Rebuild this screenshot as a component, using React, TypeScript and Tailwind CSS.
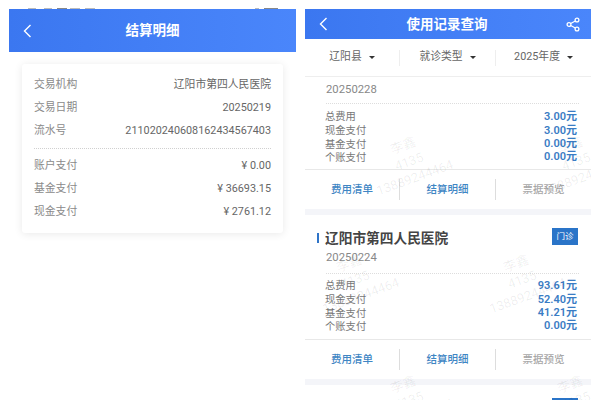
const font = "font-['Roboto','Noto_Sans_CJK_SC',sans-serif]";

function Wm({ className }: { className: string }) {
  return (
    <div className={`pointer-events-none absolute w-[100px] -rotate-[20deg] text-center text-[13px] leading-[17px] text-[#000000]/[0.07] whitespace-nowrap ${className}`}>
      <div>李鑫</div>
      <div>4135</div>
      <div>13889244464</div>
    </div>
  );
}

function Share() {
  return (
    <svg width="14" height="15" viewBox="0 0 14 15" fill="none" stroke="white" strokeWidth="1.3">
      <circle cx="11" cy="3" r="1.9" />
      <circle cx="3" cy="7.5" r="1.9" />
      <circle cx="11" cy="12" r="1.9" />
      <path d="M4.7 6.5 9.3 4M4.7 8.5 9.3 11" />
    </svg>
  );
}

function Back() {
  return (
    <svg width="9" height="14" viewBox="0 0 9 14" fill="none" stroke="white" strokeWidth="1.4">
      <path d="M7.5 1 1.5 7l6 6" />
    </svg>
  );
}

function Row({ l, r }: { l: string; r: string }) {
  return (
    <div className="flex h-[23px] items-center justify-between">
      <span className="text-[#8a8a8a]">{l}</span>
      <span className="text-[#666]">{r}</span>
    </div>
  );
}

function Fee({ l, r, h }: { l: string; r: string; h: string }) {
  return (
    <div className={`flex items-center justify-between ${h}`}>
      <span className="text-[10.3px] text-[#777]">{l}</span>
      <span className="text-[11px] font-semibold text-[#3a7cc4]">{r}</span>
    </div>
  );
}

function Fees({ v }: { v: string[] }) {
  return (
    <div className="pl-[20px] pr-[14px]">
      <Fee l="总费用" r={v[0]} h="h-[14px]" />
      <Fee l="现金支付" r={v[1]} h="h-[14px]" />
      <Fee l="基金支付" r={v[2]} h="h-[13px]" />
      <Fee l="个账支付" r={v[3]} h="h-[13px]" />
    </div>
  );
}

function Actions() {
  return (
    <div className="flex h-[40px] items-center border-t border-[#e8e8e8] text-[10.5px] font-medium">
      <div className="flex h-[21px] w-[95px] items-center justify-center border-r border-[#ddd] text-[#3f86c4]">费用清单</div>
      <div className="flex h-[21px] w-[96px] items-center justify-center border-r border-[#ddd] text-[#3f86c4]">结算明细</div>
      <div className="flex h-[21px] w-[95px] items-center justify-center text-[#a8a8a8]">票据预览</div>
    </div>
  );
}

function Filter({ t, w, border }: { t: string; w: string; border?: boolean }) {
  return (
    <div className={`flex h-[16px] items-center justify-center gap-[7px] ${w} ${border ? "border-r border-[#eee]" : ""}`}>
      <span>{t}</span>
      <span className="h-0 w-0 border-x-[3px] border-t-[3.5px] border-x-transparent border-t-[#333]" />
    </div>
  );
}

function CardHead() {
  return (
    <div className="flex h-[33px] items-start justify-between pl-[12px] pr-[13px] pt-[13px]">
      <div className="flex h-[20px] items-center">
        <span className="h-[10px] w-[2px] bg-[#2f74c8]" />
        <span className="ml-[6px] text-[13.7px] font-semibold text-[#444]">辽阳市第四人民医院</span>
      </div>
      <span className="flex h-[17px] w-[26px] items-center justify-center bg-[#2a74c8] text-[8.5px] text-white">门诊</span>
    </div>
  );
}

export default function App() {
  return (
    <div className={`flex h-[400px] w-[600px] overflow-hidden bg-white ${font}`}>
      <div className="ml-[9px] w-[287px] shrink-0 pt-[8px]">
        <div className="flex h-[1px] items-center pl-[19px]">
          <span className="h-[1px] w-[8px] bg-[#bbb]" />
          <span className="ml-[8px] h-[1px] w-[8px] bg-[#bbb]" />
          <span className="ml-[5px] h-[1px] w-[10px] bg-[#888]" />
          <span className="ml-[3px] h-[1px] w-[10px] bg-[#bbb]" />
          <span className="ml-[5px] h-[1px] w-[10px] bg-[#bbb]" />
          <span className="ml-[160px] h-[1px] w-[4px] bg-[#bbb]" />
          <span className="ml-[5px] h-[1px] w-[14px] bg-[#888]" />
        </div>
        <div className="flex h-[43px] items-center bg-gradient-to-r from-[#3b77f0] to-[#4a86fb] pl-[14px]">
          <Back />
          <div className="flex-1 pr-[23px] text-center text-[13.5px] font-semibold text-white">结算明细</div>
        </div>
        <div className="mx-[13px] mt-[12px] h-[169px] rounded-[3px] bg-white px-[12px] pt-[10px] text-[10.8px] shadow-[0_1px_8px_rgba(0,0,0,0.09)]">
          <Row l="交易机构" r="辽阳市第四人民医院" />
          <Row l="交易日期" r="20250219" />
          <Row l="流水号" r="211020240608162434567403" />
          <div className="mt-[5px] mb-[6px] border-t border-dotted border-[#d0d0d0]" />
          <Row l="账户支付" r="¥ 0.00" />
          <Row l="基金支付" r="¥ 36693.15" />
          <Row l="现金支付" r="¥ 2761.12" />
        </div>
      </div>

      <div className="relative ml-[9px] w-[286px] shrink-0 overflow-hidden pt-[9px]">
        <div className="flex h-[30px] items-center justify-between bg-gradient-to-r from-[#3b77f0] to-[#4a86fb] pl-[14px] pr-[11px]">
          <Back />
          <div className="text-[13.5px] font-semibold text-white">使用记录查询</div>
          <Share />
        </div>
        <div className="flex h-[38px] items-center border-b border-[#eee] text-[10.8px] text-[#666]">
          <Filter t="辽阳县" w="w-[95px]" border />
          <Filter t="就诊类型" w="w-[96px]" border />
          <Filter t="2025年度" w="w-[95px]" />
        </div>
        <div className="ml-[21px] mr-[12px] flex h-[27px] items-center border-b border-dotted border-[#ddd] text-[11.3px] text-[#888]">20250228</div>
        <div className="pt-[6px]">
          <Fees v={["3.00元", "3.00元", "0.00元", "0.00元"]} />
        </div>
        <div className="mt-[5px]"><Actions /></div>
        <div className="h-[6px] bg-[#f4f5f9]" />
        <CardHead />
        <div className="ml-[21px] mr-[12px] flex h-[26px] items-center border-b border-dotted border-[#ddd] pb-[4px] text-[11.3px] text-[#888]">20250224</div>
        <div className="pt-[5px]">
          <Fees v={["93.61元", "52.40元", "41.21元", "0.00元"]} />
        </div>
        <div className="mt-[6px]"><Actions /></div>
        <div className="h-[6px] bg-[#f4f5f9]" />
        <CardHead />
        <Wm className="left-[54px] top-[136px]" />
        <Wm className="left-[221px] top-[136px]" />
        <Wm className="left-[0px] top-[254px]" />
        <Wm className="left-[167px] top-[254px]" />
        <Wm className="left-[54px] top-[375px]" />
        <Wm className="left-[221px] top-[375px]" />
      </div>
    </div>
  );
}
